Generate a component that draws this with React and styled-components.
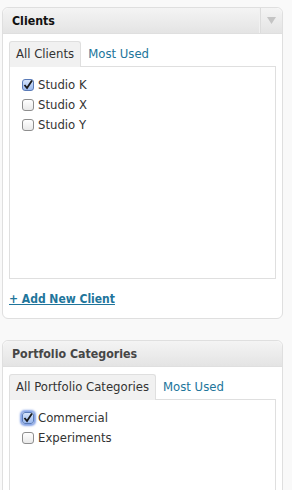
import React from 'react';
import styled, { createGlobalStyle } from 'styled-components';

const GlobalStyle = createGlobalStyle`
  html, body {
    margin: 0;
    padding: 0;
    background: #f9f9f9;
    font-family: "DejaVu Sans", "Liberation Sans", sans-serif;
    font-size: 11.7px;
    color: #333;
  }
`;

const Page = styled.div`
  display: flex;
  flex-direction: column;
  gap: 21px;
  padding: 7px 9px 0 2px;
  height: 490px;
  box-sizing: border-box;
  overflow: hidden;
`;

const Panel = styled.div`
  background: #fff;
  border: 1px solid #dfdfdf;
  border-radius: 6px;
  flex-shrink: 0;
`;

const Header = styled.div`
  display: flex;
  align-items: stretch;
  height: 25px;
  background: linear-gradient(to bottom, #f4f4f4, #e4e4e4);
  border-bottom: 1px solid #dfdfdf;
  border-radius: 6px 6px 0 0;
`;

const Title = styled.h3`
  flex: 1;
  margin: 0;
  padding-left: 9px;
  display: flex;
  align-items: center;
  font-family: "DejaVu Sans Condensed", "DejaVu Sans", sans-serif;
  font-size: 12.3px;
  font-weight: bold;
  color: ${(p) => (p.$hover ? '#111' : '#464646')};
`;

const Toggle = styled.div`
  width: 22px;
  border-left: 1px solid #f1f1f1;
  box-shadow: inset 1px 0 0 #dcdcdc;
  display: flex;
  align-items: center;
  justify-content: center;
`;

const Body = styled.div`
  padding: 7px 6px 12px 6px;
`;

const Tabs = styled.ul`
  display: flex;
  list-style: none;
  margin: 0;
  padding: 0;
`;

const Tab = styled.li`
  padding: 0 6px;
  height: 25px;
  line-height: 25px;
  border: 1px solid ${(p) => (p.$active ? '#dfdfdf' : 'transparent')};
  border-bottom: none;
  border-radius: 3px 3px 0 0;
  background: ${(p) => (p.$active ? '#f1f1f1' : 'transparent')};
  color: ${(p) => (p.$active ? '#333' : '#21759b')};
  margin-bottom: -1px;
  position: relative;
  white-space: nowrap;
`;

const Box = styled.div`
  border: 1px solid #dfdfdf;
  height: ${(p) => p.$height}px;
  box-sizing: border-box;
  padding: 10px 12px;
  display: flex;
  flex-direction: column;
  gap: 4px;
`;

const Row = styled.label`
  display: flex;
  align-items: center;
  gap: 4px;
  height: 16px;
  color: #333;
`;

const Check = styled.span`
  width: 12px;
  height: 12px;
  border: 1px solid ${(p) => (p.$checked ? '#5a7bb8' : '#8e8e8e')};
  border-radius: 3px;
  box-sizing: border-box;
  background: ${(p) =>
    p.$checked
      ? 'linear-gradient(to bottom, #d6e4fa, #9bb9ee)'
      : 'linear-gradient(to bottom, #ffffff, #e9e9e9)'};
  box-shadow: ${(p) => (p.$focus ? '0 0 2px 2px rgba(90,130,220,0.75)' : 'none')};
  display: flex;
  align-items: center;
  justify-content: center;
  flex-shrink: 0;
`;

const AddLink = styled.a`
  display: inline-block;
  margin-top: 13px;
  font-family: "DejaVu Sans Condensed", "DejaVu Sans", sans-serif;
  font-weight: bold;
  color: #21759b;
  text-decoration: underline;
  font-size: 12px;
`;

const Arrow = () => (
  <svg width="9" height="7" viewBox="0 0 9 7">
    <path d="M0 0 L9 0 L4.5 7 Z" fill="#c4c4c4" />
  </svg>
);

const CheckBox = ({ checked, focus }) => (
  <Check $checked={checked} $focus={focus}>
    {checked && (
      <svg width="10" height="10" viewBox="0 0 10 10">
        <path d="M1.5 5 L4 8 L9 0.5" fill="none" stroke="#1a1a1a" strokeWidth="1.8" />
      </svg>
    )}
  </Check>
);

const Item = ({ label, checked, focus }) => (
  <Row>
    <CheckBox checked={checked} focus={focus} />
    {label}
  </Row>
);

export default function App() {
  return (
    <>
      <GlobalStyle />
      <Page>
        <Panel>
          <Header>
            <Title $hover>Clients</Title>
            <Toggle>
              <Arrow />
            </Toggle>
          </Header>
          <Body>
            <Tabs>
              <Tab $active>All Clients</Tab>
              <Tab>Most Used</Tab>
            </Tabs>
            <Box $height={213}>
              <Item label="Studio K" checked />
              <Item label="Studio X" />
              <Item label="Studio Y" />
            </Box>
            <AddLink href="#">+ Add New Client</AddLink>
          </Body>
        </Panel>
        <Panel>
          <Header>
            <Title>Portfolio Categories</Title>
          </Header>
          <Body>
            <Tabs>
              <Tab $active>All Portfolio Categories</Tab>
              <Tab>Most Used</Tab>
            </Tabs>
            <Box $height={213}>
              <Item label="Commercial" checked focus />
              <Item label="Experiments" />
            </Box>
          </Body>
        </Panel>
      </Page>
    </>
  );
}
